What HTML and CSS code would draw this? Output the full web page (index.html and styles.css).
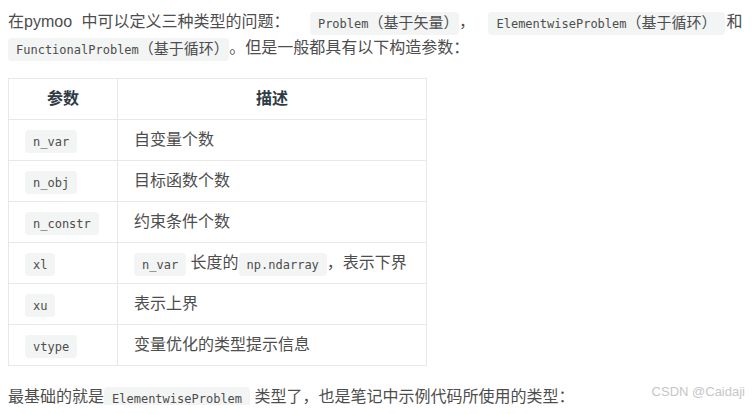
FILE: index.html
```html
<!DOCTYPE html>
<html lang="zh-CN">
<head>
<meta charset="utf-8">
<title>pymoo 问题类型</title>
<link rel="stylesheet" href="styles.css">
</head>
<body>
<div class="article">
  <p class="intro">在pymoo 中可以定义三种类型的问题： <code class="lead">Problem<span class="cjk">（基于矢量）</span></code>， <code class="mid">ElementwiseProblem<span class="cjk">（基于循环）</span></code>和<code>FunctionalProblem<span class="cjk">（基于循环）</span></code>。但是一般都具有以下构造参数：</p>
  <table class="params">
    <thead>
      <tr><th class="col-name">参数</th><th class="col-desc">描述</th></tr>
    </thead>
    <tbody>
      <tr><td><code>n_var</code></td><td>自变量个数</td></tr>
      <tr><td><code>n_obj</code></td><td>目标函数个数</td></tr>
      <tr><td><code>n_constr</code></td><td>约束条件个数</td></tr>
      <tr><td><code>xl</code></td><td><code>n_var</code> 长度的<code>np.ndarray</code>，表示下界</td></tr>
      <tr><td><code>xu</code></td><td>表示上界</td></tr>
      <tr><td><code>vtype</code></td><td>变量优化的类型提示信息</td></tr>
    </tbody>
  </table>
  <p class="outro">最基础的就是<code>ElementwiseProblem</code> 类型了，也是笔记中示例代码所使用的类型：</p>
  <div class="watermark">CSDN @Caidaji</div>
</div>
</body>
</html>
```
FILE: styles.css
```css
html, body {
  margin: 0;
  padding: 0;
  background: #ffffff;
}

body {
  padding: 9px 8px 0 8px;
  font-family: "Liberation Sans", "Noto Sans CJK SC", sans-serif;
  font-size: 16px;
  line-height: 26px;
  color: #4d4d4d;
}

.article {
  position: relative;
  height: 396px;
}

p {
  margin: 0;
}

.intro {
  margin-bottom: 17px;
  word-spacing: 5px;
}

code {
  font-family: "DejaVu Sans Mono", "Noto Sans CJK SC", monospace;
  font-size: 12px;
  line-height: 1;
  word-spacing: 0;
  color: #4d4d4d;
  background: #f3f4f4;
  border-radius: 4px;
  padding: 4.5px 8px;
}

code.lead {
  margin-left: 11px;
}

code.mid {
  margin-left: 4px;
  margin-right: 2px;
}

code .cjk {
  font-family: "Noto Sans CJK SC", sans-serif;
  font-size: 15px;
  line-height: 1;
}

.params {
  border-collapse: collapse;
  width: 419px;
  margin-bottom: 18px;
}

.params th,
.params td {
  border: 1px solid #e8e8e8;
  padding: 8px 16px;
  line-height: 24px;
  height: 24px;
  text-align: left;
  white-space: nowrap;
}

.params th {
  text-align: center;
  font-weight: bold;
  color: #2f3a45;
}

.params .col-name {
  width: 76px;
}

.watermark {
  position: absolute;
  right: 3px;
  bottom: 0;
  font-family: "Liberation Sans", sans-serif;
  font-size: 13px;
  line-height: 26px;
  color: #c6c6c6;
}
```
